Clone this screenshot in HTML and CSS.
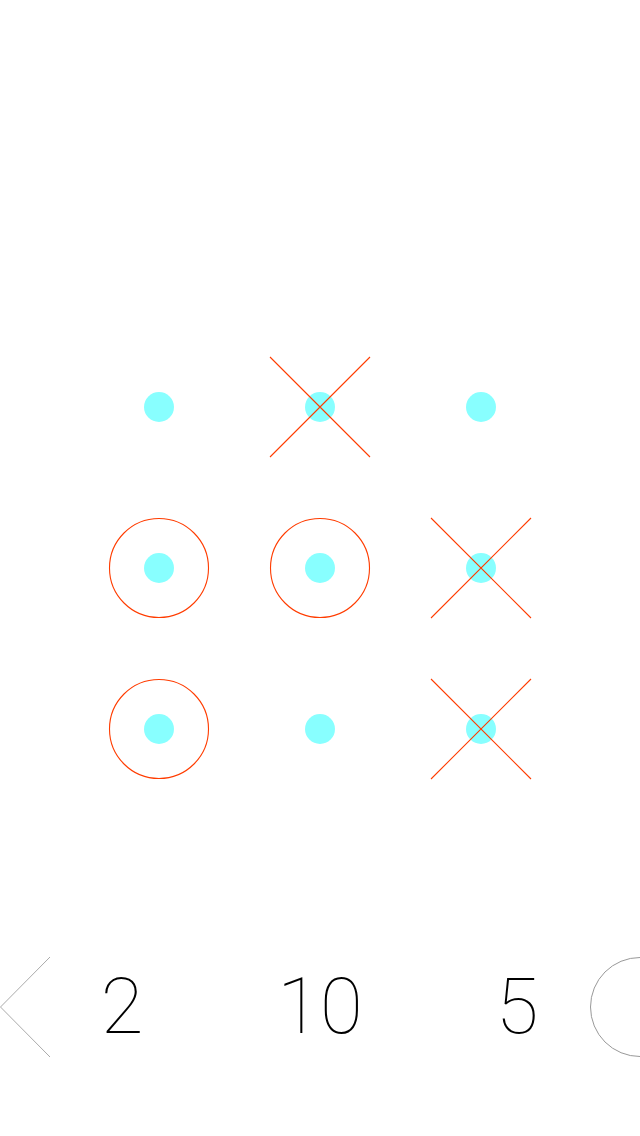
FILE: index.html
```html
<!DOCTYPE html>
<html lang="en">
<head>
    <meta charset="UTF-8">
    <meta name="viewport" content="width=device-width, initial-scale=1.0">
    <title>Tic Tac Toe</title>
    <link rel="stylesheet" href="styles.css">
</head>
<body>

    <div class="board">
        <div class="cell"><span class="dot"></span></div>
        <div class="cell"><span class="dot"></span>
            <svg class="mark" viewBox="0 0 100 100"><path d="M0 0L100 100M100 0L0 100"/></svg>
        </div>
        <div class="cell"><span class="dot"></span></div>

        <div class="cell"><span class="dot"></span>
            <svg class="mark" viewBox="0 0 100 100"><circle cx="50" cy="50" r="49.5"/></svg>
        </div>
        <div class="cell"><span class="dot"></span>
            <svg class="mark" viewBox="0 0 100 100"><circle cx="50" cy="50" r="49.5"/></svg>
        </div>
        <div class="cell"><span class="dot"></span>
            <svg class="mark" viewBox="0 0 100 100"><path d="M0 0L100 100M100 0L0 100"/></svg>
        </div>

        <div class="cell"><span class="dot"></span>
            <svg class="mark" viewBox="0 0 100 100"><circle cx="50" cy="50" r="49.5"/></svg>
        </div>
        <div class="cell"><span class="dot"></span></div>
        <div class="cell"><span class="dot"></span>
            <svg class="mark" viewBox="0 0 100 100"><path d="M0 0L100 100M100 0L0 100"/></svg>
        </div>
    </div>

    <div class="scorebar">
        <svg class="back" viewBox="0 0 50 100"><polyline points="50,0 0.5,50 50,100"/></svg>
        <div class="score">2</div>
        <div class="score">10</div>
        <div class="score">5</div>
        <svg class="next" viewBox="0 0 52 100"><circle cx="52" cy="50" r="49.5"/></svg>
    </div>

</body>
</html>
```

FILE: styles.css
```css
body {
    margin: 0;
    background: #fff;
    font-family: Roboto, "Liberation Sans", sans-serif;
    width: 640px;
    height: 1136px;
    overflow: hidden;
}
.board {
    display: grid;
    grid-template-columns: repeat(3, 100px);
    grid-auto-rows: 100px;
    gap: 61px;
    justify-content: center;
    padding-top: 357px;
}
.cell {
    position: relative;
    display: flex;
    align-items: center;
    justify-content: center;
}
.dot {
    width: 30px;
    height: 30px;
    border-radius: 50%;
    background: #88ffff;
}
.mark {
    position: absolute;
    left: 0;
    top: 0;
    width: 100px;
    height: 100px;
    overflow: visible;
    stroke: #ff3c00;
    stroke-width: 1.1;
    fill: none;
}
.scorebar {
    display: grid;
    grid-template-columns: 50px 144px 252px 142px 52px;
    height: 100px;
    margin-top: 178px;
    align-items: center;
}
.back, .next {
    width: 100%;
    height: 100px;
    fill: none;
    stroke-width: 1;
}
.back {
    stroke: #aaa;
}
.next {
    stroke: #999;
}
.score {
    text-align: center;
    font-size: 78px;
    font-weight: 100;
    color: #000;
    line-height: 100px;
}
```
